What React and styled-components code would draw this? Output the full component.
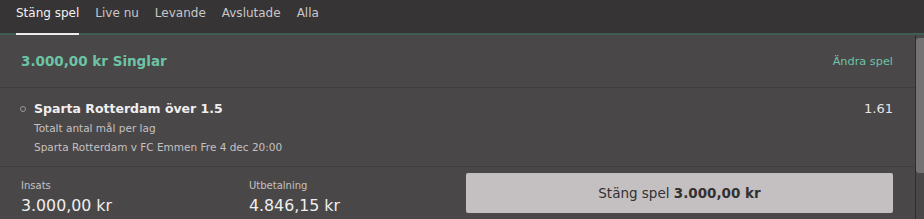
import React from "react";
import styled, { createGlobalStyle } from "styled-components";

const Global = createGlobalStyle`
  html, body { margin: 0; padding: 0; background: #4a4748; }
  body { font-family: "DejaVu Sans", "Liberation Sans", sans-serif; width: 924px; height: 219px; overflow: hidden; }
  * { box-sizing: border-box; }
`;

const Page = styled.div`
  width: 924px;
  height: 219px;
  display: flex;
  flex-direction: column;
  background: #4a4748;
`;

const TabBar = styled.nav`
  height: 35px;
  display: flex;
  gap: 16px;
  padding: 0 0 0 16px;
  background: #363435;
  border-bottom: 2px solid #3f5e52;
`;

const Tab = styled.div`
  position: relative;
  height: 33px;
  padding-top: 5px;
  font-size: 12px;
  line-height: 16px;
  color: ${(p) => (p.$active ? "#f2f2f2" : "#c9c7c8")};
  ${(p) =>
    p.$active &&
    `&::after { content: ""; position: absolute; left: 0; right: 0; bottom: -2px; height: 2px; background: #ececec; }`}
`;

const Body = styled.div`
  flex: 1;
  display: flex;
`;

const Main = styled.div`
  flex: 1;
  display: flex;
  flex-direction: column;
  padding: 0 22px 0 20px;
`;

const Scroll = styled.div`
  width: 9px;
  border-left: 1px solid #2f2d2e;
  background: #4a4748;
  padding-top: 3px;
`;

const Thumb = styled.div`
  width: 8px;
  height: 135px;
  border-radius: 3px 0 0 3px;
  background: #757273;
`;

const Header = styled.div`
  height: 53px;
  display: flex;
  align-items: center;
  justify-content: space-between;
  border-bottom: 1px solid #3f3d3e;
  margin: 0 -22px 0 -20px;
  padding: 0 22px 0 20px;
`;

const Title = styled.div`
  color: #6cc4a4;
  font-weight: bold;
  font-size: 13.5px;
  padding-left: 1px;
`;

const Link = styled.div`
  color: #6cc4a4;
  font-size: 11.3px;
`;

const Selection = styled.div`
  height: 79px;
  display: flex;
  align-items: flex-start;
  padding-top: 12px;
  border-bottom: 1px solid #3f3d3e;
  margin: 0 -22px 0 -20px;
  padding-left: 20px;
  padding-right: 22px;
`;

const Dot = styled.div`
  width: 6px;
  height: 6px;
  border-radius: 50%;
  border: 1px solid #9a9798;
  margin: 6px 8px 0 0;
  flex: none;
`;

const Info = styled.div`
  flex: 1;
  display: flex;
  flex-direction: column;
`;

const Name = styled.div`
  color: #f0eeef;
  font-weight: bold;
  font-size: 12.5px;
  line-height: 18px;
`;

const Sub = styled.div`
  color: #c4c1c2;
  font-size: 10.5px;
  line-height: 19px;
  margin-top: ${(p) => p.$mt || 0}px;
`;

const Odds = styled.div`
  color: #e6e4e5;
  font-size: 13px;
  line-height: 18px;
`;

const Footer = styled.div`
  flex: 1;
  display: flex;
  align-items: center;
`;

const Stat = styled.div`
  width: ${(p) => p.$w}px;
  display: flex;
  flex-direction: column;
  padding-top: 8px;
  padding-left: 1px;
`;

const StatLabel = styled.div`
  color: #c4c1c2;
  font-size: 10px;
  line-height: 14px;
`;

const StatValue = styled.div`
  color: #f0eeef;
  font-size: 15.8px;
  line-height: 20px;
  margin-top: 3px;
`;

const Button = styled.button`
  margin-left: auto;
  width: 427px;
  height: 40px;
  border: none;
  border-radius: 2px;
  background: #c4c0c1;
  color: #333132;
  font-family: inherit;
  font-size: 13.5px;
  b { font-weight: bold; }
`;

export default function App() {
  return (
    <Page>
      <Global />
      <TabBar>
        <Tab $active>Stäng spel</Tab>
        <Tab>Live nu</Tab>
        <Tab>Levande</Tab>
        <Tab>Avslutade</Tab>
        <Tab>Alla</Tab>
      </TabBar>
      <Body>
        <Main>
          <Header>
            <Title>3.000,00 kr Singlar</Title>
            <Link>Ändra spel</Link>
          </Header>
          <Selection>
            <Dot />
            <Info>
              <Name>Sparta Rotterdam över 1.5</Name>
              <Sub $mt={1}>Totalt antal mål per lag</Sub>
              <Sub>Sparta Rotterdam v FC Emmen Fre 4 dec 20:00</Sub>
            </Info>
            <Odds>1.61</Odds>
          </Selection>
          <Footer>
            <Stat $w={228}>
              <StatLabel>Insats</StatLabel>
              <StatValue>3.000,00 kr</StatValue>
            </Stat>
            <Stat $w={201}>
              <StatLabel>Utbetalning</StatLabel>
              <StatValue>4.846,15 kr</StatValue>
            </Stat>
            <Button>
              Stäng spel <b>3.000,00 kr</b>
            </Button>
          </Footer>
        </Main>
        <Scroll>
          <Thumb />
        </Scroll>
      </Body>
    </Page>
  );
}
